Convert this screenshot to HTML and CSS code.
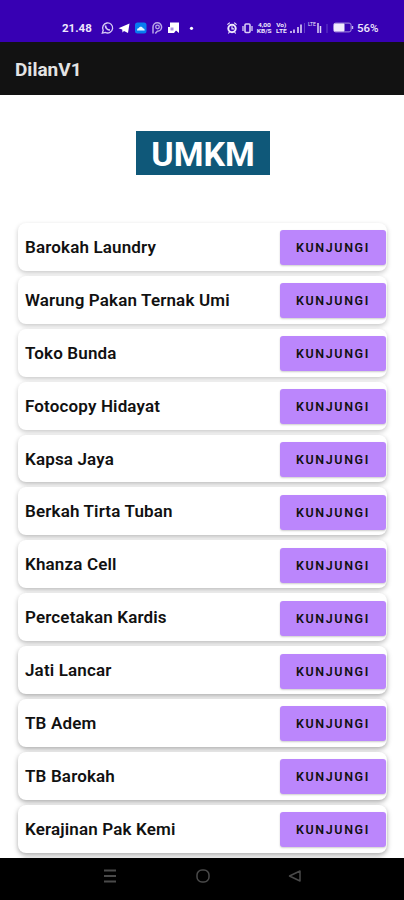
FILE: index.html
```html
<!DOCTYPE html>
<html lang="id">
<head>
  <meta charset="UTF-8" />
  <meta name="viewport" content="width=device-width, initial-scale=1.0"/>
  <title>DilanV1 - UMKM</title>
  <link rel="stylesheet" href="styles.css">
</head>
<body>

  <div class="status-bar">
    <span class="clock">21.48</span>
    <svg class="notif" width="96" height="14" viewBox="0 0 96 14">
      <!-- whatsapp -->
      <path d="M1.3 12.2l.9-3A5 5 0 1 1 4.400 11.400z" fill="none" stroke="#d9cdf5" stroke-width="1.3"/>
      <path d="M4.500 4.500c0 2.500 2 4.500 4.500 4.500" fill="none" stroke="#d9cdf5" stroke-width="1.700"/>
      <!-- telegram -->
      <path d="M17.500 7.300L28.500 2.500 27 12l-4-2-1.500 1.500-.3-3z" fill="#fff"/>
      <!-- cloud app -->
      <rect x="34" y="1.500" width="11.500" height="11" rx="2.500" fill="#087cf0"/>
      <path d="M36 9.500c0-2 1-2.200 1.700-2.200.5-2 3.700-2 4.200 0 1 0 1.800.7 1.800 2.200z" fill="#e4f5ff"/>
      <!-- picsart -->
      <path d="M52 12.500V6a4.300 4.300 0 1 1 4.300 4.300l-2 2.200" fill="none" stroke="#b9a6e8" stroke-width="1.500"/>
      <circle cx="56.500" cy="6" r="1.800" fill="none" stroke="#b9a6e8" stroke-width="1.300"/>
      <!-- gallery -->
      <path d="M69 1.500h9v10.500l-3-2.500-2 2.500h-6V6h2z" fill="#fff"/>
      <path d="M69.500 6.500h3v3h-3z" fill="#aa91e2"/>
      <circle cx="90.500" cy="7.300" r="1.600" fill="#fff"/>
    </svg>
    <svg class="system" width="26" height="14" viewBox="0 0 26 14">
      <!-- alarm -->
      <circle cx="5" cy="7.500" r="3.700" fill="#3700b3" stroke="#eee7fc" stroke-width="2"/>
      <path d="M5 5.300v2.500h2M.4 3.600l2.400-2M9.600 3.600l-2.400-2M2.500 11l-1.200 1.500M7.500 11l1.200 1.500" fill="none" stroke="#eee7fc" stroke-width="1.200"/>
      <!-- vibrate -->
      <rect x="18" y="3" width="5" height="8.500" rx="1" fill="none" stroke="#d9cdf5" stroke-width="1.600"/>
      <path d="M16 5v5M25 5v5" stroke="#d9cdf5" stroke-width="1.300"/>
    </svg>
    <span class="speed"><b>4,00</b><b>KB/S</b></span>
    <span class="speed volte"><b>Vo)</b><b>LTE</b></span>
    <svg class="signal" width="17" height="12" viewBox="0 0 17 12">
      <path d="M1 9v2M4 7.500V11M8 5v6M11 2.500V11" stroke="#dfd4f7" stroke-width="1.600"/>
      <path d="M14.500 1v10" stroke="#6540c6"/>
    </svg>
    <span class="lte">LTE</span>
    <svg class="signal2" width="14" height="12" viewBox="0 0 14 12">
      <path d="M1 1v10M3.500 4v7" stroke="#dfd4f7" stroke-width="1.500"/>
      <path d="M10 2v9" stroke="#6540c6"/>
    </svg>
    <svg class="battery" width="21" height="11" viewBox="0 0 21 11">
      <rect x=".6" y="1.100" width="17.500" height="8.800" rx="2" fill="none" stroke="#a890df"/>
      <rect x="1" y="1.500" width="10.500" height="8" rx="1" fill="#f0eafd"/>
      <path d="M19.500 4v3" stroke="#c7b6ef" stroke-width="1.400"/>
    </svg>
    <span class="percent">56%</span>
  </div>

  <header class="app-bar">DilanV1</header>

  <main class="content">
    <h1>UMKM</h1>

    <div class="list">
      <div class="card"><span>Barokah Laundry</span><button>KUNJUNGI</button></div>
      <div class="card"><span>Warung Pakan Ternak Umi</span><button>KUNJUNGI</button></div>
      <div class="card"><span>Toko Bunda</span><button>KUNJUNGI</button></div>
      <div class="card"><span>Fotocopy Hidayat</span><button>KUNJUNGI</button></div>
      <div class="card"><span>Kapsa Jaya</span><button>KUNJUNGI</button></div>
      <div class="card"><span>Berkah Tirta Tuban</span><button>KUNJUNGI</button></div>
      <div class="card"><span>Khanza Cell</span><button>KUNJUNGI</button></div>
      <div class="card"><span>Percetakan Kardis</span><button>KUNJUNGI</button></div>
      <div class="card"><span>Jati Lancar</span><button>KUNJUNGI</button></div>
      <div class="card"><span>TB Adem</span><button>KUNJUNGI</button></div>
      <div class="card"><span>TB Barokah</span><button>KUNJUNGI</button></div>
      <div class="card"><span>Kerajinan Pak Kemi</span><button>KUNJUNGI</button></div>
      <div class="card"></div>
    </div>
  </main>

  <nav class="nav-bar">
    <svg width="14" height="14" viewBox="0 0 14 14"><path d="M1 1.500h12M1 7h12M1 12.500h12" stroke="#4a4a4a" stroke-width="2"/></svg>
    <svg width="14" height="14" viewBox="0 0 14 14"><rect x="1" y="1" width="12" height="12" rx="5" fill="none" stroke="#4a4a4a" stroke-width="1.500"/></svg>
    <svg width="14" height="14" viewBox="0 0 14 14"><path d="M1.500 7l10.500-5v10z" fill="none" stroke="#4a4a4a" stroke-width="1.500" stroke-linejoin="round"/></svg>
  </nav>

</body>
</html>
```
FILE: styles.css
```css
* {
  box-sizing: border-box;
}

body {
  margin: 0;
  height: 900px;
  display: flex;
  flex-direction: column;
  overflow: hidden;
  background: #fff;
  font-family: Roboto, "Liberation Sans", sans-serif;
}

.status-bar {
  flex: none;
  height: 42px;
  padding: 13px 0 0 62px;
  display: flex;
  align-items: center;
  background: #3700b3;
  color: #eee7fc;
}

.clock {
  width: 39px;
  font-size: 11.5px;
  font-weight: 700;
}

.notif {
  flex: none;
}

.system {
  flex: none;
  margin-left: 30px;
}

.speed {
  width: 17px;
  margin-left: 3px;
  display: flex;
  flex-direction: column;
  align-items: center;
  font-size: 6.5px;
  line-height: 8px;
}

.speed b {
  height: 6px;
  line-height: 6px;
  font-size: 5.5px;
  transform: scaleX(1.2);
}

.volte {
  width: 13px;
  margin-left: 2px;
}

.signal {
  flex: none;
  margin-left: 2px;
}

.lte {
  width: 9px;
  margin-left: 1px;
  font-size: 5px;
  align-self: flex-start;
  margin-top: 8px;
}

.signal2 {
  flex: none;
}

.battery {
  flex: none;
  margin-left: 2px;
}

.percent {
  margin-left: 3px;
  font-size: 11.5px;
  font-weight: 500;
}

.app-bar {
  flex: none;
  height: 53px;
  padding-left: 15px;
  background: #121212;
  color: #e3e3e3;
  font-size: 19px;
  font-weight: 700;
  line-height: 55px;
}

.content {
  flex: 1;
  min-height: 0;
  overflow: hidden;
  padding: 36px 17px 0 18px;
}

h1 {
  width: 134px;
  height: 44px;
  margin: 0 0 48px 118px;
  background: #0f5879;
  color: #fff;
  font-size: 34px;
  font-weight: 700;
  line-height: 46px;
  text-align: center;
}

.list {
  display: flex;
  flex-direction: column;
  gap: 5px;
}

.card {
  flex: none;
  height: 47.9px;
  padding: 0 1px 0 7px;
  display: flex;
  align-items: center;
  justify-content: space-between;
  border-radius: 8px;
  background: #fff;
  box-shadow: 0 2px 5px rgba(0, 0, 0, 0.22);
}

.card:nth-child(n+5) {
  box-shadow: 0 2px 5px rgba(0, 0, 0, 0.28);
}

.card:nth-child(n+9) {
  box-shadow: 0 2px 5px rgba(0, 0, 0, 0.34);
}

.card span {
  font-size: 17px;
  font-weight: 600;
  letter-spacing: 0.15px;
  color: #111;
}

.card button {
  width: 106px;
  height: 35px;
  margin-top: 2px;
  padding: 0;
  border: none;
  border-radius: 3px;
  background: #bb86fc;
  box-shadow: 0 1px 2px rgba(0, 0, 0, 0.2);
  color: #111;
  font-family: inherit;
  font-size: 12.5px;
  font-weight: 600;
  letter-spacing: 1.6px;
}

.nav-bar {
  flex: none;
  height: 42px;
  padding: 0 102px 6px 103px;
  display: flex;
  align-items: center;
  justify-content: space-between;
  background: #000;
}
```
